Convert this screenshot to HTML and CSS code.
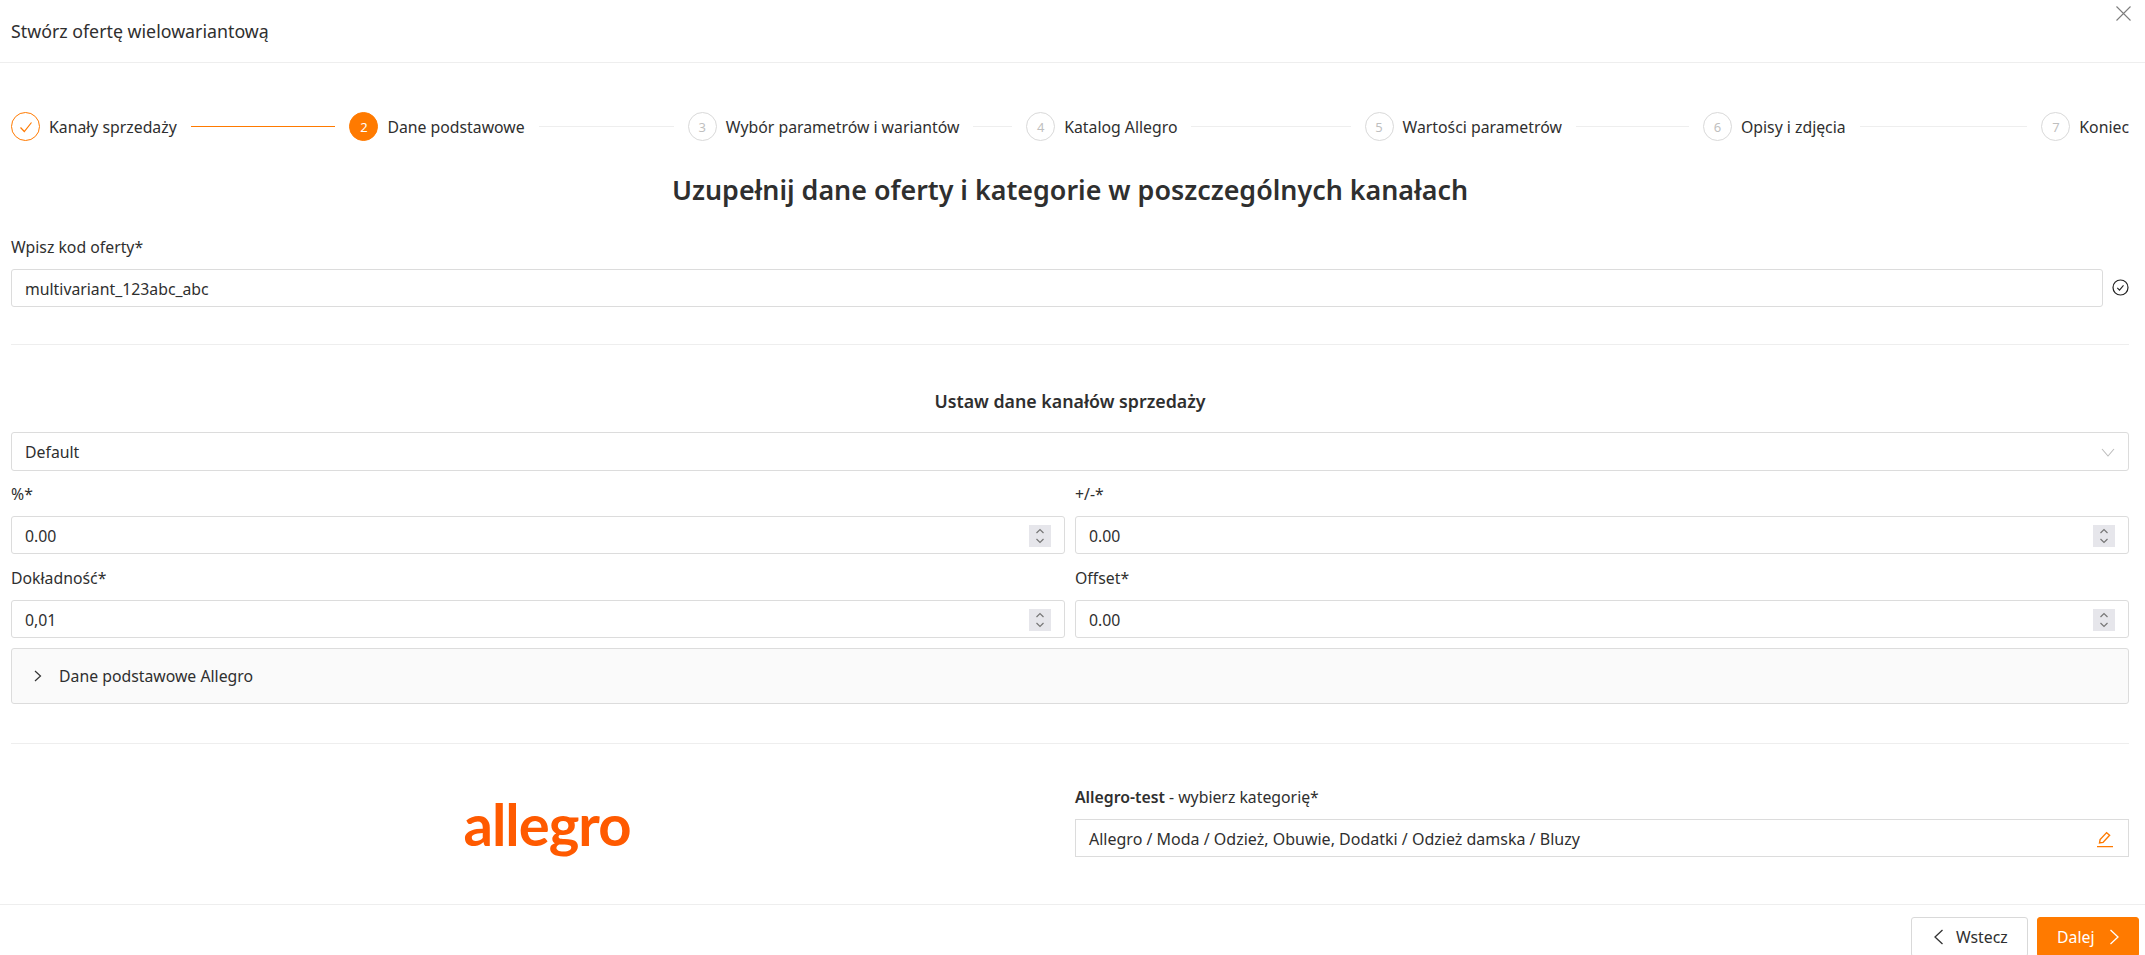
FILE: index.html
```html
<!DOCTYPE html>
<html lang="pl">
<head>
    <meta charset="UTF-8">
    <title>Stwórz ofertę wielowariantową</title>
    <link rel="stylesheet" href="styles.css">
</head>
<body>
    <div class="modal">
        <div class="modal-header">Stwórz ofertę wielowariantową</div>
        <svg class="close" width="15" height="15" viewBox="0 0 15 15"><path d="M.5 .5l14 14M14.5 .5l-14 14" fill="none" stroke="#7d7d7d" stroke-width="1.1"/></svg>

        <div class="modal-body">
            <div class="steps">
                <div class="step">
                    <span class="circle done"><svg width="14" height="12" viewBox="0 0 14 12"><path d="M1.5 6.5l3.8 4L12.5 1.5" fill="none" stroke="#ff7a00" stroke-width="1.2"/></svg></span>
                    <span class="step-name">Kanały sprzedaży</span>
                    <span class="step-line active"></span>
                </div>
                <div class="step">
                    <span class="circle current">2</span>
                    <span class="step-name">Dane podstawowe</span>
                    <span class="step-line"></span>
                </div>
                <div class="step">
                    <span class="circle">3</span>
                    <span class="step-name">Wybór parametrów i wariantów</span>
                    <span class="step-line"></span>
                </div>
                <div class="step">
                    <span class="circle">4</span>
                    <span class="step-name">Katalog Allegro</span>
                    <span class="step-line"></span>
                </div>
                <div class="step">
                    <span class="circle">5</span>
                    <span class="step-name">Wartości parametrów</span>
                    <span class="step-line"></span>
                </div>
                <div class="step">
                    <span class="circle">6</span>
                    <span class="step-name">Opisy i zdjęcia</span>
                    <span class="step-line"></span>
                </div>
                <div class="step last">
                    <span class="circle">7</span>
                    <span class="step-name">Koniec</span>
                </div>
            </div>

            <h1>Uzupełnij dane oferty i kategorie w poszczególnych kanałach</h1>

            <div class="label code-label">Wpisz kod oferty*</div>
            <div class="code-row">
                <div class="field">multivariant_123abc_abc</div>
                <svg class="code-check" width="17" height="17" viewBox="0 0 17 17"><circle cx="8.5" cy="8.5" r="7.5" fill="none" stroke="#222" stroke-width="1.2"/><path d="M5.3 8.8l2.2 2.3 4-4.8" fill="none" stroke="#222" stroke-width="1.1"/></svg>
            </div>

            <div class="divider first"></div>

            <h2>Ustaw dane kanałów sprzedaży</h2>

            <div class="field select">Default
                <svg width="14" height="9" viewBox="0 0 14 9"><path d="M1 1l6 7 6-7" fill="none" stroke="#bdbdbd" stroke-width="1.1"/></svg>
            </div>

            <div class="grid">
                <div>
                    <div class="label">%*</div>
                    <div class="field number">0.00
                        <span class="spinner"><svg width="10" height="18" viewBox="0 0 10 18"><path d="M1.5 6l3.5-3.5L8.5 6M1.5 12L5 15.5 8.5 12" fill="none" stroke="#777" stroke-width="1.2"/></svg></span>
                    </div>
                </div>
                <div>
                    <div class="label">+/-*</div>
                    <div class="field number">0.00
                        <span class="spinner"><svg width="10" height="18" viewBox="0 0 10 18"><path d="M1.5 6l3.5-3.5L8.5 6M1.5 12L5 15.5 8.5 12" fill="none" stroke="#777" stroke-width="1.2"/></svg></span>
                    </div>
                </div>
                <div>
                    <div class="label">Dokładność*</div>
                    <div class="field number">0,01
                        <span class="spinner"><svg width="10" height="18" viewBox="0 0 10 18"><path d="M1.5 6l3.5-3.5L8.5 6M1.5 12L5 15.5 8.5 12" fill="none" stroke="#777" stroke-width="1.2"/></svg></span>
                    </div>
                </div>
                <div>
                    <div class="label">Offset*</div>
                    <div class="field number">0.00
                        <span class="spinner"><svg width="10" height="18" viewBox="0 0 10 18"><path d="M1.5 6l3.5-3.5L8.5 6M1.5 12L5 15.5 8.5 12" fill="none" stroke="#777" stroke-width="1.2"/></svg></span>
                    </div>
                </div>
            </div>

            <div class="collapse">
                <svg width="10" height="12" viewBox="0 0 10 12"><path d="M2 1l5.5 5L2 11" fill="none" stroke="#333" stroke-width="1.2"/></svg>
                Dane podstawowe Allegro
            </div>

            <div class="divider second"></div>

            <div class="channel">
                <div class="logo">allegro</div>
                <div>
                    <div class="label"><strong>Allegro-test</strong> - wybierz kategorię*</div>
                    <div class="field category">Allegro / Moda / Odzież, Obuwie, Dodatki / Odzież damska / Bluzy
                        <svg width="18" height="18" viewBox="0 0 18 18"><path d="M3.5 13l.6-3.4L10.6 2.6l3 2.6L7 12.4z M1 16.6h16" fill="none" stroke="#ff7a00" stroke-width="1.4"/></svg>
                    </div>
                </div>
            </div>
        </div>

        <div class="modal-footer">
            <button class="btn back">
                <svg width="11" height="16" viewBox="0 0 11 16"><path d="M9.5 1L2 8l7.5 7" fill="none" stroke="#333" stroke-width="1.3"/></svg>
                Wstecz
            </button>
            <button class="btn primary">
                Dalej
                <svg width="11" height="16" viewBox="0 0 11 16"><path d="M1.5 1L9 8l-7.5 7" fill="none" stroke="#fff" stroke-width="1.3"/></svg>
            </button>
        </div>
    </div>
</body>
</html>
```

FILE: styles.css
```css
html, body {
    margin: 0;
    height: 955px;
    overflow: hidden;
    background: #fff;
}
body {
    font-family: "Noto Sans", sans-serif;
    font-size: 15.8px;
    color: #2f2f2f;
}
.modal {
    position: relative;
    height: 955px;
}
.modal-header {
    box-sizing: border-box;
    height: 63px;
    padding: 19px 0 0 11px;
    font-size: 17.8px;
    line-height: 24px;
    border-bottom: 1px solid #eee;
}
.close {
    position: absolute;
    top: 6px;
    right: 14px;
}
.modal-body {
    box-sizing: border-box;
    height: 842px;
    padding: 49px 16px 0 11px;
    border-bottom: 1px solid #eee;
}

/* steps */
.steps {
    display: flex;
    height: 29px;
}
.step {
    flex: 1 1 0;
    display: flex;
    align-items: center;
    white-space: nowrap;
}
.step.last {
    flex: 0 0 87px;
}
.circle {
    flex: none;
    box-sizing: border-box;
    width: 29px;
    height: 29px;
    display: flex;
    align-items: center;
    justify-content: center;
    border: 1px solid #d9d9d9;
    border-radius: 50%;
    font-size: 13px;
    color: #bfbfbf;
}
.circle.done {
    border-color: #ff7a00;
}
.circle.current {
    background: #ff7a00;
    border-color: #ff7a00;
    color: #fff;
}
.step-name {
    margin-left: 9px;
    padding-top: 1px;
}
.step-line {
    flex: 1;
    height: 1px;
    margin: 0 14px;
    background: #eee;
}
.step-line.active {
    background: #ff7a00;
}

h1 {
    margin: 30px 0 0;
    font-size: 26.85px;
    line-height: 38px;
    font-weight: 600;
    text-align: center;
}
h2 {
    margin: 44px 0 19px;
    font-size: 17.8px;
    line-height: 24px;
    font-weight: 600;
    text-align: center;
}

/* form */
.label {
    line-height: 22px;
    margin-bottom: 11px;
}
.label strong {
    font-weight: 600;
}
.code-label {
    margin-top: 27px;
}
.field {
    box-sizing: border-box;
    height: 38px;
    padding: 1px 13px 0;
    display: flex;
    align-items: center;
    justify-content: space-between;
    border: 1px solid #dcdcdc;
    border-radius: 3px;
    background: #fff;
}
.code-row {
    display: flex;
    align-items: center;
}
.code-row .field {
    flex: 1;
}
.code-check {
    margin: 0 0 2px 9px;
}
.divider {
    height: 1px;
    background: #eee;
}
.divider.first {
    margin-top: 37px;
}
.divider.second {
    margin-top: 39px;
}
.select {
    height: 39px;
}
.grid {
    display: grid;
    grid-template-columns: 1fr 1fr;
    column-gap: 10px;
    row-gap: 13px;
    margin-top: 12px;
}
.spinner {
    width: 22px;
    height: 22px;
    display: flex;
    align-items: center;
    justify-content: center;
    background: #e6e6eb;
}
.collapse {
    box-sizing: border-box;
    height: 56px;
    margin-top: 10px;
    padding-left: 21px;
    display: flex;
    align-items: center;
    gap: 16px;
    border: 1px solid #dcdcdc;
    border-radius: 3px;
    background: #fafafa;
}
.channel {
    display: grid;
    grid-template-columns: 1fr 1fr;
    column-gap: 10px;
    margin-top: 42px;
}
.logo {
    padding: 3px 0 0 18px;
    text-align: center;
    font-family: Lato, sans-serif;
    font-size: 58px;
    line-height: 70px;
    font-weight: 700;
    color: #ff5a00;
    letter-spacing: -1px;
}
.category {
    border-radius: 0;
    padding-right: 14px;
    font-size: 16px;
}

/* footer */
.modal-footer {
    display: flex;
    justify-content: flex-end;
    gap: 9px;
    padding: 12px 6px 0 0;
}
.btn {
    box-sizing: border-box;
    height: 40px;
    display: flex;
    align-items: center;
    font-family: inherit;
    font-size: 15.8px;
    color: #2f2f2f;
    background: #fff;
    border: 1px solid #d9d9d9;
    border-radius: 3px;
}
.btn.back {
    width: 117px;
    padding: 0 0 0 21px;
    gap: 12px;
}
.btn.primary {
    width: 102px;
    padding: 0 0 0 19px;
    gap: 15px;
    color: #fff;
    background: #ff7a00;
    border-color: #ff7a00;
}
```
